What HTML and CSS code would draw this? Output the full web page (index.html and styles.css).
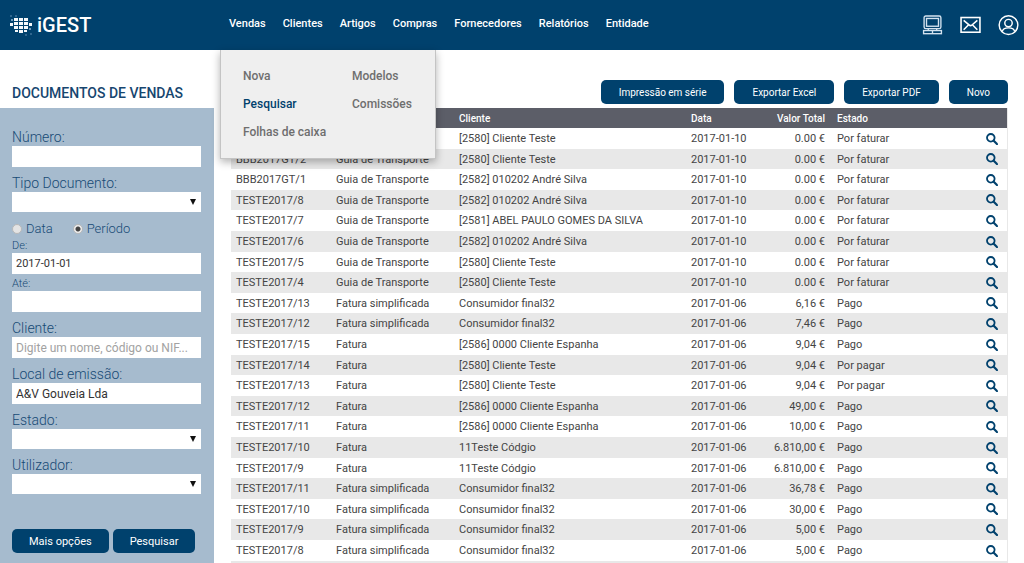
FILE: index.html
```html
<!DOCTYPE html>
<html lang="pt">
<head>
<meta charset="utf-8">
<title>iGEST - Documentos de Vendas</title>
<link rel="stylesheet" href="styles.css">
</head>
<body>
<svg class="defs" aria-hidden="true">
  <symbol id="search" viewBox="0 0 12 12"><circle cx="4.8" cy="4.8" r="3.8" fill="none" stroke="currentColor" stroke-width="1.8"/><path d="M8 8 11 11" stroke="currentColor" stroke-width="2.2" stroke-linecap="square"/></symbol>
</svg>
<header class="topbar">
  <a class="logo" href="#">
    <svg class="logo-mark" viewBox="0 0 24 22" aria-hidden="true">
      <g fill="#f4f8fb">
        <path d="M5 4h4v3H5zM10 4h4v3h-4zM15 4h4v3h-4zM5 8h4v3H5zM10 8h4v3h-4zM15 8h4v3h-4zM5 12h4v3H5zM10 12h4v3h-4zM15 12h4v3h-4zM10 16h4v3h-4z"/>
        <path d="M6 16h3v2H6zM15 16h3v2h-3zM1 9h3v3H1zM20 9h3v3h-3z"/>
      </g>
      <g fill="#6f9bbd"><path d="M2 5h2v2H2zM20 14h2v2h-2z"/></g>
      <g fill="#2f668f"><path d="M1 1h2v2H1zM6 1h2v2H6zM16 20h2v2h-2zM21 19h2v2h-2z"/></g>
    </svg>
    <span>iGEST</span>
  </a>
  <nav class="menu">
    <a href="#">Vendas</a><a href="#">Clientes</a><a href="#">Artigos</a><a href="#">Compras</a><a href="#">Fornecedores</a><a href="#">Relatórios</a><a href="#">Entidade</a>
    <div class="submenu">
      <a href="#">Nova</a><a href="#">Modelos</a>
      <a class="current" href="#">Pesquisar</a><a href="#">Comissões</a>
      <a href="#">Folhas de caixa</a>
    </div>
  </nav>
  <div class="tools">
    <a href="#" aria-label="Computador"><svg viewBox="0 0 20 20"><g fill="none" stroke="#d3e2ef" stroke-width="1.3"><rect x="2" y="1" width="16" height="12" rx="1.6"/><rect x="4.300" y="3.300" width="11.400" height="7.400"/><path d="M6 13v1.800M14 13v1.800"/><rect x="1.500" y="14.800" width="17" height="3"/><path d="M10 14.800v3"/></g></svg></a>
    <a href="#" aria-label="Mensagens"><svg viewBox="0 0 20 20"><g fill="none" stroke="#fff" stroke-width="1.5"><rect x="1" y="2.400" width="18" height="14"/><path d="M3.500 5.200 8.600 9.500q1.400 1.200 2.800 0l5.100-4.300M3.500 14 8 9.500M16.500 14 12 9.500"/></g></svg></a>
    <a href="#" aria-label="Conta"><svg viewBox="0 0 22 22"><g fill="none" stroke="#fff" stroke-width="1.5"><circle cx="11" cy="10.600" r="9.800"/><circle cx="11" cy="8.500" r="3.900"/><path d="M4.500 17.500c.5-3 3-4 6.500-4s6 1 6.500 4"/></g></svg></a>
  </div>
</header>
<div class="page">
  <aside class="side">
    <h1>DOCUMENTOS DE VENDAS</h1>
    <form class="filters">
      <div class="field"><label for="num">Número:</label><input id="num" type="text"></div>
      <div class="field"><label for="tipo">Tipo Documento:</label><select id="tipo"><option></option></select></div>
      <div class="radios">
        <label><input type="radio" name="modo">Data</label>
        <label><input type="radio" name="modo" checked>Período</label>
      </div>
      <div class="field small"><label for="de">De:</label><input id="de" type="text" value="2017-01-01"></div>
      <div class="field small"><label for="ate">Até:</label><input id="ate" type="text"></div>
      <div class="field"><label for="cli">Cliente:</label><input id="cli" type="text" placeholder="Digite um nome, código ou NIF..."></div>
      <div class="field"><label for="loc">Local de emissão:</label><input id="loc" type="text" value="A&amp;V Gouveia Lda"></div>
      <div class="field"><label for="est">Estado:</label><select id="est"><option></option></select></div>
      <div class="field"><label for="uti">Utilizador:</label><select id="uti"><option></option></select></div>
      <div class="buttons"><button type="button" class="btn">Mais opções</button><button type="button" class="btn">Pesquisar</button></div>
    </form>
  </aside>
  <main class="content">
    <div class="actions">
      <button type="button" class="btn">Impressão em série</button>
      <button type="button" class="btn">Exportar Excel</button>
      <button type="button" class="btn">Exportar PDF</button>
      <button type="button" class="btn">Novo</button>
    </div>
    <table class="docs">
      <colgroup><col class="c-num"><col class="c-tipo"><col class="c-cli"><col class="c-data"><col class="c-valor"><col class="c-estado"><col class="c-ver"></colgroup>
      <thead><tr><th></th><th></th><th>Cliente</th><th>Data</th><th class="num">Valor Total</th><th>Estado</th><th></th></tr></thead>
      <tbody>
        <tr><td></td><td></td><td>[2580] Cliente Teste</td><td>2017-01-10</td><td class="num">0.00 €</td><td>Por faturar</td><td><a href="#" aria-label="Ver"><svg><use href="#search"/></svg></a></td></tr>
        <tr><td>BBB2017GT/2</td><td>Guia de Transporte</td><td>[2580] Cliente Teste</td><td>2017-01-10</td><td class="num">0.00 €</td><td>Por faturar</td><td><a href="#" aria-label="Ver"><svg><use href="#search"/></svg></a></td></tr>
        <tr><td>BBB2017GT/1</td><td>Guia de Transporte</td><td>[2582] 010202 André Silva</td><td>2017-01-10</td><td class="num">0.00 €</td><td>Por faturar</td><td><a href="#" aria-label="Ver"><svg><use href="#search"/></svg></a></td></tr>
        <tr><td>TESTE2017/8</td><td>Guia de Transporte</td><td>[2582] 010202 André Silva</td><td>2017-01-10</td><td class="num">0.00 €</td><td>Por faturar</td><td><a href="#" aria-label="Ver"><svg><use href="#search"/></svg></a></td></tr>
        <tr><td>TESTE2017/7</td><td>Guia de Transporte</td><td>[2581] ABEL PAULO GOMES DA SILVA</td><td>2017-01-10</td><td class="num">0.00 €</td><td>Por faturar</td><td><a href="#" aria-label="Ver"><svg><use href="#search"/></svg></a></td></tr>
        <tr><td>TESTE2017/6</td><td>Guia de Transporte</td><td>[2582] 010202 André Silva</td><td>2017-01-10</td><td class="num">0.00 €</td><td>Por faturar</td><td><a href="#" aria-label="Ver"><svg><use href="#search"/></svg></a></td></tr>
        <tr><td>TESTE2017/5</td><td>Guia de Transporte</td><td>[2580] Cliente Teste</td><td>2017-01-10</td><td class="num">0.00 €</td><td>Por faturar</td><td><a href="#" aria-label="Ver"><svg><use href="#search"/></svg></a></td></tr>
        <tr><td>TESTE2017/4</td><td>Guia de Transporte</td><td>[2580] Cliente Teste</td><td>2017-01-10</td><td class="num">0.00 €</td><td>Por faturar</td><td><a href="#" aria-label="Ver"><svg><use href="#search"/></svg></a></td></tr>
        <tr><td>TESTE2017/13</td><td>Fatura simplificada</td><td>Consumidor final32</td><td>2017-01-06</td><td class="num">6,16 €</td><td>Pago</td><td><a href="#" aria-label="Ver"><svg><use href="#search"/></svg></a></td></tr>
        <tr><td>TESTE2017/12</td><td>Fatura simplificada</td><td>Consumidor final32</td><td>2017-01-06</td><td class="num">7,46 €</td><td>Pago</td><td><a href="#" aria-label="Ver"><svg><use href="#search"/></svg></a></td></tr>
        <tr><td>TESTE2017/15</td><td>Fatura</td><td>[2586] 0000 Cliente Espanha</td><td>2017-01-06</td><td class="num">9,04 €</td><td>Pago</td><td><a href="#" aria-label="Ver"><svg><use href="#search"/></svg></a></td></tr>
        <tr><td>TESTE2017/14</td><td>Fatura</td><td>[2580] Cliente Teste</td><td>2017-01-06</td><td class="num">9,04 €</td><td>Por pagar</td><td><a href="#" aria-label="Ver"><svg><use href="#search"/></svg></a></td></tr>
        <tr><td>TESTE2017/13</td><td>Fatura</td><td>[2580] Cliente Teste</td><td>2017-01-06</td><td class="num">9,04 €</td><td>Por pagar</td><td><a href="#" aria-label="Ver"><svg><use href="#search"/></svg></a></td></tr>
        <tr><td>TESTE2017/12</td><td>Fatura</td><td>[2586] 0000 Cliente Espanha</td><td>2017-01-06</td><td class="num">49,00 €</td><td>Pago</td><td><a href="#" aria-label="Ver"><svg><use href="#search"/></svg></a></td></tr>
        <tr><td>TESTE2017/11</td><td>Fatura</td><td>[2586] 0000 Cliente Espanha</td><td>2017-01-06</td><td class="num">10,00 €</td><td>Pago</td><td><a href="#" aria-label="Ver"><svg><use href="#search"/></svg></a></td></tr>
        <tr><td>TESTE2017/10</td><td>Fatura</td><td>11Teste Códgio</td><td>2017-01-06</td><td class="num">6.810,00 €</td><td>Pago</td><td><a href="#" aria-label="Ver"><svg><use href="#search"/></svg></a></td></tr>
        <tr><td>TESTE2017/9</td><td>Fatura</td><td>11Teste Códgio</td><td>2017-01-06</td><td class="num">6.810,00 €</td><td>Pago</td><td><a href="#" aria-label="Ver"><svg><use href="#search"/></svg></a></td></tr>
        <tr><td>TESTE2017/11</td><td>Fatura simplificada</td><td>Consumidor final32</td><td>2017-01-06</td><td class="num">36,78 €</td><td>Pago</td><td><a href="#" aria-label="Ver"><svg><use href="#search"/></svg></a></td></tr>
        <tr><td>TESTE2017/10</td><td>Fatura simplificada</td><td>Consumidor final32</td><td>2017-01-06</td><td class="num">30,00 €</td><td>Pago</td><td><a href="#" aria-label="Ver"><svg><use href="#search"/></svg></a></td></tr>
        <tr><td>TESTE2017/9</td><td>Fatura simplificada</td><td>Consumidor final32</td><td>2017-01-06</td><td class="num">5,00 €</td><td>Pago</td><td><a href="#" aria-label="Ver"><svg><use href="#search"/></svg></a></td></tr>
        <tr><td>TESTE2017/8</td><td>Fatura simplificada</td><td>Consumidor final32</td><td>2017-01-06</td><td class="num">5,00 €</td><td>Pago</td><td><a href="#" aria-label="Ver"><svg><use href="#search"/></svg></a></td></tr>
        <tr><td></td><td></td><td></td><td></td><td></td><td></td><td></td></tr>
      </tbody>
    </table>
  </main>
</div>
</body>
</html>
```
FILE: styles.css
```css
* { box-sizing: border-box; }
body {
  margin: 0;
  height: 100vh;
  overflow: hidden;
  display: flex;
  flex-direction: column;
  background: #fff;
  font-family: Roboto, "Liberation Sans", sans-serif;
  font-size: 12px;
  color: #444;
}
a { color: inherit; text-decoration: none; }
.defs { position: absolute; width: 0; height: 0; }

.topbar {
  flex: none;
  display: flex;
  align-items: center;
  height: 50px;
  padding: 0 5px 0 9px;
  background: #00416d;
  color: #fff;
}
.logo { display: flex; align-items: center; gap: 4px; width: 220px; font-size: 20px; font-weight: 500; line-height: 24px; }
.logo-mark { width: 24px; height: 22px; }
.menu { position: relative; display: flex; gap: 17px; font-size: 11px; font-weight: 500; line-height: 48px; height: 50px; }
.submenu {
  position: absolute;
  z-index: 2;
  top: 50px;
  left: -9px;
  width: 216px;
  display: grid;
  grid-template-columns: 109px 1fr;
  padding: 12px 12px 12px 22px;
  background: #efefef;
  border: 1px solid #c4c4c4;
  border-top: 0;
  box-shadow: 0 3px 8px rgba(0, 0, 0, .3);
  color: #6e6e6e;
  font-size: 12px;
  line-height: 28px;
  white-space: nowrap;
}
.submenu .current { color: #00416d; }
.tools { margin-left: auto; display: flex; align-items: center; gap: 17px; }
.tools a { display: flex; }
.tools svg { width: 21px; height: 21px; }

.page { flex: 1; display: flex; min-height: 0; }
.side { flex: none; width: 214px; display: flex; flex-direction: column; }
.side h1 {
  margin: 0;
  padding: 34px 12px 6px;
  color: #17466f;
  font-size: 14px;
  font-weight: 500;
  line-height: 18px;
  white-space: nowrap;
}
.filters { flex: 1; padding: 20px 13px 10px 12px; background: #a6bbce; color: #174a75; }
.field { display: flex; flex-direction: column; margin-bottom: 7px; }
.field label { font-size: 14px; font-weight: 300; line-height: 18px; }
.field input, .field select {
  width: 100%;
  height: 21px;
  margin: 0;
  padding: 0 4px;
  border: 0;
  border-radius: 0;
  background: #fff;
  color: #333;
  font: inherit;
}
.field input::placeholder { color: #a2a2a2; opacity: 1; }
.field select {
  height: 20px;
  appearance: none;
  background: #fff url("data:image/svg+xml,%3Csvg xmlns='http://www.w3.org/2000/svg' width='6' height='6'%3E%3Cpath d='M0 0h6L3 6z' fill='%23111'/%3E%3C/svg%3E") no-repeat right 5px center;
}
.radios { display: flex; gap: 20px; height: 19px; }
.radios label { display: flex; align-items: center; gap: 4px; font-size: 13px; font-weight: 300; line-height: 18px; }
.radios input {
  appearance: none;
  width: 10px;
  height: 10px;
  margin: 0;
  border: 1px solid #b8b8b8;
  border-radius: 50%;
  background: #e4e4e4;
}
.radios input:checked { background: radial-gradient(circle, #444 0 2px, #eee 3px); }
.small { margin-bottom: 2px; }
.small label { font-size: 11px; line-height: 15px; }
.small input { font-size: 11px; }
.small + .field:not(.small) { margin-top: 7px; }
.buttons { display: flex; gap: 4px; margin-top: 35px; }
.btn {
  height: 24px;
  padding: 0 17px;
  border: 0;
  border-radius: 5px;
  background: #00416d;
  color: #fff;
  font-family: inherit;
  font-size: 11px;
  white-space: nowrap;
}

.content { flex: 1; min-width: 0; padding: 30px 16px 0 17px; }
.actions { display: flex; justify-content: flex-end; gap: 10px; margin-bottom: 4px; }
.actions .btn { padding: 0 18px; font-size: 10px; }
.docs { width: 100%; table-layout: fixed; border-collapse: separate; border-spacing: 0; border-right: 1px solid #e8e8e8; }
.c-num { width: 100px; }
.c-tipo { width: 123px; }
.c-data { width: 65px; }
.c-valor { width: 81px; }
.c-estado { width: 149px; }
.c-ver { width: 26px; }
.docs th, .docs td { padding: 0 5px; text-align: left; font-size: 11px; white-space: nowrap; }
.docs th { height: 20px; background: #5c5e68; color: #fff; font-size: 10px; font-weight: 500; }
.docs td { height: 21px; }
.docs tr:nth-child(5n+2) td, .docs tr:nth-child(5n+4) td { height: 20px; }
.docs .num { text-align: right; padding-right: 7px; }
.docs tbody tr:nth-child(even) { background: #e8e8e8; }
.docs td a { display: flex; color: #00416d; }
.docs svg { width: 12px; height: 12px; }
```
